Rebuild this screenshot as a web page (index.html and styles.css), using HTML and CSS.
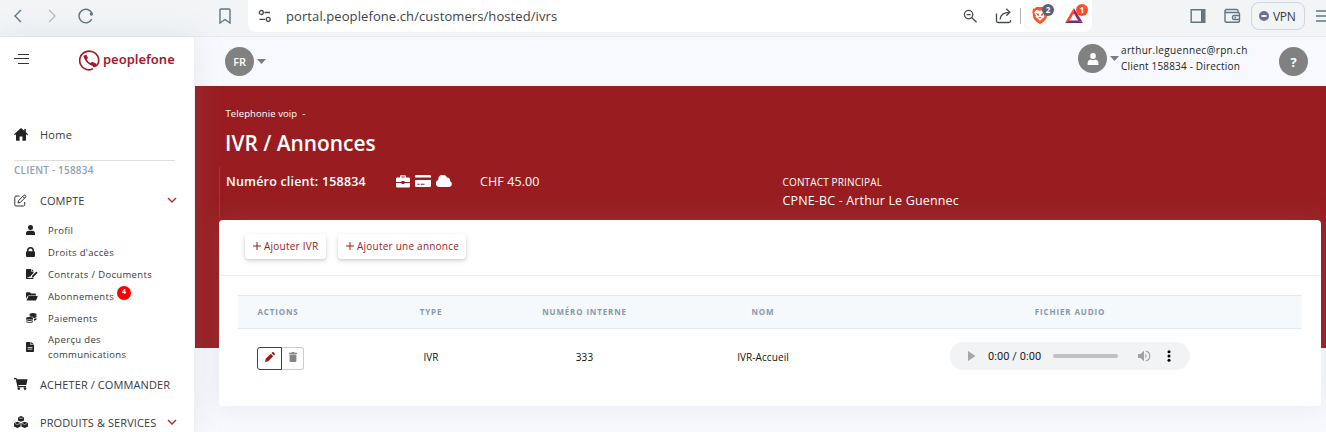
FILE: index.html
```html
<!DOCTYPE html>
<html lang="fr">
<head>
<meta charset="utf-8">
<title>IVR / Annonces</title>
<link rel="stylesheet" href="styles.css">
</head>
<body>
<header class="browser">
  <svg class="nav-back" width="10" height="16" viewBox="0 0 10 16"><path d="M8 2 2 8l6 6"/></svg>
  <svg class="nav-forward" width="10" height="16" viewBox="0 0 10 16"><path d="m2 2 6 6-6 6"/></svg>
  <svg class="reload" width="18" height="18" viewBox="0 0 18 18"><path d="M14.8 12.2A6.8 6.8 0 1 1 15 6.3"/><circle cx="14.4" cy="7" r="1.7" class="solid"/></svg>
  <svg class="bookmark" width="12" height="16" viewBox="0 0 12 16"><path d="M2 1h8a1 1 0 0 1 1 1v13l-5-3.5L1 15V2a1 1 0 0 1 1-1z"/></svg>
  <div class="address">
    <svg class="tune" width="14" height="14" viewBox="0 0 14 14"><circle cx="3.3" cy="3.5" r="2"/><path d="M6.5 3.5H12M1.5 10.3H7"/><circle cx="10.2" cy="10.3" r="2"/></svg>
    <span class="url">portal.peoplefone.ch/customers/hosted/ivrs</span>
    <svg class="lens" width="15" height="15" viewBox="0 0 15 15"><circle cx="5.6" cy="5.6" r="4.2"/><path d="M3.6 5.6h4M8.800 8.800l4.800 4.400"/></svg>
    <svg class="share" width="18" height="18" viewBox="0 0 18 18"><path d="M1.500 6.500V14q0 1.500 1.500 1.500h11q1.500 0 1.500-1.500v-1M5 12.500c.3-4.500 2.500-7 9.500-7.200M11.300 1.800l3.500 3.500-3.500 3.500"/></svg>
    <span class="sep"></span>
    <span class="extension brave">
      <svg width="18" height="20" viewBox="0 0 18 20"><path fill="#fb542b" d="M5.300 2h7.400l1.400 1.500 1.700.1.800 3-.8 5.700c-.7 3-3.800 5-6.800 6.800-3-1.800-6-3.800-6.800-6.800L1.400 6.600l.8-3 1.700-.1z"/><path fill="#fff" d="M5.200 5 9 5.700 12.800 5l2 2.500-1.600 2.800.2 1.600-2 1.500L9 16l-2.400-2.600-2-1.500.2-1.600-1.600-2.800z"/><path fill="#fb542b" d="m5.300 8 2.500.7.2 2.300-1.800-.7zM12.700 8l-2.500.7-.2 2.300 1.800-.7zM7.400 12.400 9 11.700l1.600.7L9 13.800z"/></svg>
      <b class="count">2</b>
    </span>
    <span class="extension rewards">
      <svg width="20" height="18" viewBox="0 0 20 18"><path fill="#ff4724" d="M9.800 1 1 16l4.500-2.500 4.400-7.300z"/><path fill="#9e1f63" d="m9.800 1 9.200 15-4.900-2.500L9.900 6.200z"/><path fill="#662d91" d="M1 16h18l-4.900-2.600H5.500z"/></svg>
      <b class="count orange">1</b>
    </span>
  </div>
  <svg class="panel" width="16" height="16" viewBox="0 0 16 16"><path d="M1.200 1.700h13.600v12.600H1.200z"/><path class="solid" d="M11 2h3.500v12H11z"/></svg>
  <svg class="wallet" width="17" height="16" viewBox="0 0 17 16"><path d="M14 4.500V3q0-1.500-1.500-1.500H2.500Q1 1.500 1 3v9.500Q1 14.300 3 14.300h11q1.500 0 1.500-1.500V6q0-1.500-1.500-1.500H2.500Q1 4.500 1 3M15.500 7.500H10q-1.500 0-1.500 2t1.500 2h5.500M10.500 9.500h1.500"/></svg>
  <span class="vpn"><i class="vpn-dot"></i>VPN</span>
  <svg class="app-menu" width="14" height="14" viewBox="0 0 14 14"><path d="M0 2h14M0 7h14M0 12h14"/></svg>
</header>

<div class="app">
  <aside class="sidebar">
    <div class="brand">
      <svg class="burger" width="16" height="12" viewBox="0 0 16 12"><path d="M4 1.500h11M0 5.500h15M4 10.500h11"/></svg>
      <svg class="logo" width="21" height="21" viewBox="0 0 21 21"><path class="ring" d="M19.300 13A9 9 0 0 0 13.500 1.800 9.300 9.300 0 1 0 14 18.800M14 16.200q3.500.8 5.300-3.200"/><path class="solid" d="M4.300 5.800 7.500 4.800 9 8 7.700 9.400Q9 11.900 11.700 13l1.600-1.200 4 2-.5 1.900q-1.700.6-4.500-.3Q6 12.700 4.300 5.800z"/></svg>
      <span class="brand-name">peoplefone</span>
    </div>
    <nav>
      <a class="item home"><svg width="14" height="13" viewBox="0 0 14 13"><path d="M7 0 0 6.300l.8.900 1.200-1V12q0 .8.800.8h2.800V8.500h2.800v4.300h2.800q.8 0 .8-.8V6.200l1.200 1 .8-.9-2.200-2V1h-1.500v1.700z"/></svg><span>Home</span></a>
      <p class="client">CLIENT - 158834</p>
      <a class="item account"><svg width="13" height="13" viewBox="0 0 13 13"><path class="line" d="M5.500 2H2Q.8 2 .8 3.200v7.600Q.8 12 2 12h7.500q1.200 0 1.200-1.200V8M4 9l.5-2.300L10 1.200q.5-.4 1 0l.7.800q.5.500 0 1L6.300 8.500zM8.800 2.400l1.800 1.800"/></svg><span>COMPTE</span><svg class="chev" width="10" height="6" viewBox="0 0 10 6"><path d="m1 1 4 4 4-4"/></svg></a>
      <div class="submenu">
        <a class="sub"><svg width="9" height="10" viewBox="0 0 9 10"><circle cx="4.500" cy="2.600" r="2.500"/><path d="M0 10V8.500Q0 5.800 2.800 5.800h3.400Q9 5.800 9 8.500V10z"/></svg><span>Profil</span></a>
        <a class="sub"><svg width="9" height="10" viewBox="0 0 9 10"><path d="M1 4.300V3.500a3.500 3.500 0 0 1 7 0v.8q1 0 1 1V9q0 1-1 1H1Q0 10 0 9V5.300q0-1 1-1zm1.500 0h4v-.8a2 2 0 0 0-4 0z"/></svg><span>Droits d'accès</span></a>
        <a class="sub"><svg width="12" height="10" viewBox="0 0 12 10"><path d="M0 .8Q0 0 .8 0H5v2.500h2.500V4L4.800 6.800 4.500 8l-.7-.8L3 8.300H1.500V9H5l2.500-.5V9.200q0 .8-.8.8H.8Q0 10 0 9.200zM5.700 0 7.500 1.900H5.700zM10.300 2.500l1.300 1.300L7.500 8l-1.700.4L6.200 6.700z"/></svg><span>Contrats / Documents</span></a>
        <a class="sub"><svg width="12" height="9" viewBox="0 0 12 9"><path d="M0 6.800V1.200Q0 .3.900.3h3L5 1.500h4q.9 0 .9.900v1H3Q2 3.400 1.600 4zM2.500 4h8.700q.7 0 .4.700L10.200 8q-.2.500-.8.500H.6Z"/></svg><span>Abonnements</span><b class="alert">4</b></a>
        <a class="sub"><svg width="11" height="10" viewBox="0 0 11 10"><ellipse cx="7" cy="1.500" rx="3.500" ry="1.500"/><path d="M3.500 2.500Q7 4 10.500 2.200V4Q9.500 5 7.800 5 7 3.600 3.500 3.500zM8 5.800q1.500 0 2.500-.8v1.500Q9.500 7.600 8 7.700z"/><ellipse cx="3.600" cy="5.200" rx="3.500" ry="1.300"/><path d="M.1 6.200q3.500 1.500 7 0v1.100q-3.500 1.600-7 0zm0 2q3.500 1.500 7 0V9q-3.500 1.700-7 0z"/></svg><span>Paiements</span></a>
        <a class="sub tall"><svg width="8" height="10" viewBox="0 0 8 10"><path fill-rule="evenodd" d="M0 .8Q0 0 .8 0h3.700v3H8v6.200q0 .8-.8.800H.8Q0 10 0 9.200zM5.200 0 8 2.400H5.200zM1.600 5v.8h4.800V5zm0 1.800v.8h4.800v-.8z"/></svg><span>Aperçu des<br>communications</span></a>
      </div>
      <a class="item shop"><svg width="14" height="12" viewBox="0 0 14 12"><path d="M0 0h2.500l.4 1.200h10.700L12.400 6.500q-.1.600-.8.600H4.300l.2 1H12v1.100H3.500L1.800 1.200H0z"/><circle cx="4.800" cy="10.600" r="1.300"/><circle cx="11" cy="10.600" r="1.300"/></svg><span>ACHETER / COMMANDER</span></a>
      <a class="item products"><svg width="14" height="12" viewBox="0 0 14 12"><path d="m7 0 3 1.200v3.300L7 5.700 4 4.500V1.200zM3.400 5.700l3.200 1.300v3.500L3.400 12 0 10.500V7zM10.600 5.700 14 7v3.500L10.600 12l-3.200-1.500V7z"/><path class="edge" d="M4.500 1.600 7 2.600l2.500-1M.7 7.400l2.700 1.200 2.700-1.200M8 7.400l2.600 1.200 2.700-1.200"/></svg><span>PRODUITS &amp; SERVICES</span><svg class="chev" width="10" height="6" viewBox="0 0 10 6"><path d="m1 1 4 4 4-4"/></svg></a>
    </nav>
  </aside>

  <main class="main">
    <div class="topbar">
      <span class="avatar lang">FR</span><i class="caret"></i>
      <span class="avatar user"><svg width="12" height="12" viewBox="0 0 12 12"><circle cx="6" cy="3" r="2.900"/><path d="M.6 12v-1.500Q.6 7 3.500 6.600q2.500 1.200 5 0 2.900.4 2.900 3.900V12z"/></svg></span><i class="caret"></i>
      <div class="identity"><span class="mail">arthur.leguennec@rpn.ch</span><span class="who">Client 158834 - Direction</span></div>
      <span class="avatar help">?</span>
    </div>
    <section class="hero">
      <p class="crumb">Telephonie voip &nbsp;-</p>
      <h1>IVR / Annonces</h1>
      <div class="summary">
        <strong class="number">Numéro client: 158834</strong>
        <span class="services">
          <svg width="14" height="13" viewBox="0 0 14 13"><path fill-rule="evenodd" d="M4 2.500V1.300Q4 .2 5 .2h4q1 0 1 1.100v1.200h2.700q1.300 0 1.300 1.300V7H8.500V6h-3v1H0V3.800q0-1.300 1.300-1.300zM5.300 1.500v1h3.400v-1zM0 8h5.500v1h3V8H14v3.200q0 1.300-1.300 1.300H1.300Q0 12.500 0 11.200z"/></svg>
          <svg width="16" height="12" viewBox="0 0 16 12"><path fill-rule="evenodd" d="M0 2.500V1.300Q0 0 1.300 0h13.400Q16 0 16 1.300v1.200zM0 5h16v5.700q0 1.300-1.300 1.300H1.300Q0 12 0 10.700zm2.500 3.800v1h2.200v-1zm3.300 0v1h3.700v-1z"/></svg>
          <svg width="17" height="12" viewBox="0 0 17 12"><path d="M3.700 12A3.600 3.600 0 0 1 2.300 5 4.600 4.600 0 0 1 11 2.500 2.800 2.800 0 0 1 14 6a3.200 3.200 0 0 1-.5 6z"/></svg>
        </span>
        <span class="balance">CHF 45.00</span>
        <div class="contact"><small>CONTACT PRINCIPAL</small><span>CPNE-BC - Arthur Le Guennec</span></div>
      </div>
    </section>
    <section class="card">
      <div class="toolbar">
        <button class="add"><svg width="8" height="8" viewBox="0 0 8 8"><path d="M4 0v8M0 4h8"/></svg><span>Ajouter IVR</span></button>
        <button class="add second"><svg width="8" height="8" viewBox="0 0 8 8"><path d="M4 0v8M0 4h8"/></svg><span>Ajouter une annonce</span></button>
      </div>
      <table class="ivrs">
        <colgroup><col class="c-actions"><col class="c-type"><col class="c-number"><col class="c-name"><col></colgroup>
        <thead><tr><th class="first">ACTIONS</th><th>TYPE</th><th>NUMÉRO INTERNE</th><th>NOM</th><th>FICHIER AUDIO</th></tr></thead>
        <tbody><tr>
          <td class="first"><div class="actions"><span class="edit"><svg width="10" height="10" viewBox="0 0 10 10"><path d="m0 10 .7-3.200 5-5L8.200 4.300l-5 5zM6.400 1.100 7.200.3q.7-.6 1.400 0L9.700 1.400q.6.700 0 1.400l-.8.800z"/></svg></span><span class="del"><svg width="8" height="10" viewBox="0 0 8 10"><path d="M0 .7h2.500L3 0h2l.5.700H8v1.200H0zM.6 2.600h6.800V9q0 1-1 1H1.600q-1 0-1-1z"/></svg></span></div></td>
          <td>IVR</td><td>333</td><td>IVR-Accueil</td>
          <td><div class="player">
            <svg class="play" width="8" height="10" viewBox="0 0 8 10"><path d="M0 0v10l7.500-5z"/></svg>
            <span class="time">0:00 / 0:00</span><i class="track"></i>
            <svg class="volume" width="13" height="12" viewBox="0 0 13 12"><path class="solid" d="M0 4h2.500L6 .8v10.400L2.500 8H0z"/><path class="solid" d="M7.300 3.500q2.500 2.500 0 5z"/><path d="M7.800 1q4 1.200 4 5t-4 5"/></svg>
            <svg class="dots" width="4" height="12" viewBox="0 0 4 12"><circle cx="2" cy="1.700" r="1.500"/><circle cx="2" cy="6" r="1.500"/><circle cx="2" cy="10.300" r="1.500"/></svg>
          </div></td>
        </tr></tbody>
      </table>
    </section>
  </main>
</div>
</body>
</html>
```
FILE: styles.css
```css
* { box-sizing: border-box; }
body { margin: 0; width: 1326px; height: 432px; overflow: hidden; background: #f8f9fe; color: #212529; font-family: "Open Sans", "Noto Sans", sans-serif; font-size: 10px; }
svg { display: block; flex: none; }
p, h1 { margin: 0; }
span, strong, small { white-space: nowrap; }

.browser { display: flex; align-items: flex-start; height: 37px; overflow: hidden; background: #f2f4f6; border-bottom: 1px solid #e7eaed; }
.browser > * { flex: none; }
.browser svg { fill: none; stroke: #627580; stroke-width: 1.4; }
.browser .solid { fill: #627580; stroke: none; }
.nav-back { margin: 8px 0 0 13px; }
.browser .nav-forward { margin: 8px 0 0 24px; stroke: #b4bec5; }
.reload { margin: 7px 0 0 20px; }
.bookmark { margin: 8px 0 0 124px; }
.address { display: flex; width: 844px; height: 32px; margin-left: 17px; padding-left: 10px; background: #fff; border-radius: 0 0 8px 8px; }
.address > * { flex: none; }
.browser .address svg { stroke: #454a4f; stroke-width: 1.3; }
.tune { margin-top: 9px; }
.url { width: 677px; margin-left: 14px; line-height: 33px; font-size: 13px; letter-spacing: .09px; color: #3d4248; }
.lens { margin-top: 9px; }
.share { margin: 7px 0 0 17px; }
.sep { width: 1px; height: 16px; margin: 8px 0 0 7px; background: #a9afb4; }
.extension { position: relative; }
.browser .address .extension svg { stroke: none; }
.brave { width: 18px; margin: 5px 0 0 10px; }
.rewards { width: 20px; margin: 7px 0 0 15px; }
.count { position: absolute; top: -1px; left: 11px; width: 12px; height: 12px; border-radius: 6px; background: #5b6070; color: #fff; font: bold 8px/12px "Open Sans", sans-serif; text-align: center; }
.rewards .count { top: -3px; left: 12px; background: #ff4b28; }
.panel { margin: 8px 0 0 98px; }
.wallet { margin: 8px 0 0 18px; }
.vpn { display: flex; align-items: center; width: 54px; height: 28px; margin: 2px 0 0 10px; padding-left: 7px; border: 1px solid #ced5dc; border-radius: 8px; font-size: 12px; letter-spacing: -.3px; color: #35393e; }
.vpn-dot { width: 10px; height: 10px; margin-right: 4px; border: solid #6b7096; border-width: 4px 2px; border-radius: 5px; background: #fff; }
.app-menu { margin: 9px 0 0 11px; }

.app { display: flex; height: 395px; }
.sidebar { position: relative; z-index: 1; width: 195px; padding: 0 20px 0 14px; background: #fff; border-right: 1px solid #eef0f5; box-shadow: 0 0 28px rgba(136, 152, 170, .17); }
.brand { display: flex; align-items: center; height: 44px; }
.burger { fill: none; stroke: #333; stroke-width: 1; }
.logo { margin: 2px 0 0 49px; }
.ring { fill: none; stroke: #a31b2b; stroke-width: 1.7; }
.logo .solid { fill: #a31b2b; }
.brand-name { margin: -1px 0 0 3px; font: 600 13px "Noto Sans", sans-serif; letter-spacing: -.02px; color: #a31b2b; }
.item { display: flex; align-items: center; height: 22px; font-size: 11px; color: #3a3a3a; }
.item > svg:first-child, .sub > svg { fill: #222; }
.item .edge { fill: none; stroke: #fff; stroke-width: .6; }
.item > span { margin-left: 12px; letter-spacing: .1px; }
.home { margin-top: 42px; }
.home > span { letter-spacing: .25px; }
.client { margin-top: 15px; width: 161px; padding-top: 2px; border-top: 1px solid #dedede; line-height: 15px; font-size: 10px; font-weight: 600; letter-spacing: .2px; color: #8fa0b5; }
.account { margin-top: 11px; }
.account > span { margin-left: 13px; letter-spacing: .05px; }
.item svg .line { fill: none; stroke: #333; stroke-width: 1; }
.item .chev { margin-left: auto; margin-right: -3px; fill: none; stroke: #b02a30; stroke-width: 1.4; }
.submenu { margin-top: 8px; padding-left: 12px; }
.sub { position: relative; display: grid; grid-template-columns: 22px auto; align-items: center; height: 22px; font-size: 9.5px; line-height: 15px; letter-spacing: .34px; color: #3a3a3a; }
.sub span { justify-self: start; }
.sub.tall { height: 36px; }
.alert { position: absolute; left: 91px; top: 1px; width: 14px; height: 14px; border-radius: 7px; background: #f00; color: #fff; font-size: 7px; line-height: 11px; letter-spacing: 0; text-align: center; }
.shop { margin-top: 8px; }
.products { margin-top: 16px; }

.main { width: 1131px; }
.topbar { display: flex; height: 49px; padding-left: 30px; }
.avatar { display: flex; align-items: center; justify-content: center; width: 29px; height: 29px; border-radius: 50%; background: #818181; color: #fff; }
.avatar svg { fill: #fff; }
.lang { margin-top: 10px; font-size: 11px; font-weight: 600; letter-spacing: -.2px; }
.caret { width: 9px; height: 5px; margin: 22px 0 0 3px; background: #777c86; clip-path: polygon(0 0, 100% 0, 50% 100%); }
.user { margin: 7px 0 0 812px; }
.user + .caret { margin-top: 19px; }
.identity { display: grid; grid-auto-rows: 16px; width: 158px; height: 32px; margin: 5px 0 0 2px; line-height: 16px; font-size: 10px; color: #222; }
.identity span { justify-self: start; }
.mail { font-weight: 500; letter-spacing: .33px; }
.who { letter-spacing: .18px; }
.help { margin-top: 10px; font-size: 13px; font-weight: 700; }
.hero { height: 262px; padding: 19px 0 0 30px; background: #991d20; color: #fff; }
.crumb { height: 18px; padding-left: .5px; font-size: 9.5px; line-height: 18px; letter-spacing: .09px; }
.hero h1 { margin-top: 6px; font-size: 20.9px; line-height: 28px; font-weight: 600; }
.summary { display: flex; height: 54px; margin: 9px 0 0 -6px; padding-left: 6px; border-left: 1px solid #a63236; border-radius: 4px 0 0 4px; }
.number { width: 170px; line-height: 32px; font-size: 12.5px; font-weight: 600; letter-spacing: .19px; }
.services { display: flex; align-items: center; gap: 5px; width: 84px; height: 30px; }
.services svg { fill: #fff; }
.balance { width: 302px; line-height: 32px; font-size: 12.5px; letter-spacing: .1px; }
.contact { display: grid; grid-auto-rows: 18px; height: 36px; margin-top: 8px; padding-left: .5px; line-height: 18px; font-size: 12.5px; letter-spacing: .15px; }
.contact > * { justify-self: start; }
.contact small { margin-top: -1px; font-size: 10px; }
.card { position: relative; width: 1102px; height: 186px; margin: -128px 0 0 24px; background: #fff; border-radius: 4px; box-shadow: 0 0 28px rgba(136, 152, 170, .17); }
.toolbar { display: flex; height: 56px; padding: 14px 0 0 26px; border-bottom: 1px solid #eeeff1; }
.add { display: flex; align-items: center; width: 81px; height: 25px; padding: 0 0 1px 8px; border: 0; border-radius: 3px; background: #fff; color: #991d20; font: 500 10px "Open Sans", sans-serif; letter-spacing: .23px; box-shadow: 0 2px 5px rgba(50, 50, 93, .18), 0 1px 2px rgba(0, 0, 0, .08); }
.add span { margin-left: 3px; }
.add.second { width: 128px; margin-left: 12px; }
.add svg { stroke: #991d20; stroke-width: 1; }
.ivrs { width: 1064px; margin: 19px 0 0 19px; border-collapse: separate; border-spacing: 0; table-layout: fixed; text-align: center; }
.c-actions { width: 143px; }
.c-type { width: 100px; }
.c-number { width: 207px; }
.c-name { width: 150px; }
th { height: 34px; padding: 0 0 1px; border: solid #e5eaef; border-width: 1px 0; background: #f5f9fc; color: #8898aa; font-size: 8px; font-weight: 700; letter-spacing: .85px; }
td { height: 57px; padding: 0 0 1px; color: #111; font-size: 10px; letter-spacing: .08px; }
.ivrs .first { padding-left: 19.5px; text-align: left; }
.actions { display: flex; width: 47px; height: 23px; margin: 2px 0 0 -.5px; }
.actions span { display: flex; align-items: center; justify-content: center; width: 25px; border: 1px solid #991d20; border-radius: 3px 0 0 3px; }
.actions svg { fill: #991d20; margin-top: -2px; }
.actions .del { width: 22px; border-color: #ccc; border-left: 0; border-radius: 0 3px 3px 0; }
.actions .del svg { fill: #858585; }
.player { display: flex; align-items: center; width: 240px; height: 28px; margin: -2px auto 0; padding-left: 18px; border-radius: 14px; background: #f1f3f4; }
.play { fill: #a5a6a7; }
.time { width: 65px; margin-left: 12px; text-align: left; font: 11px Roboto, sans-serif; letter-spacing: .08px; color: #202124; }
.track { width: 65px; height: 4px; border-radius: 2px; background: #bfc1c2; }
.volume { margin-left: 20px; fill: none; stroke: #a0a1a2; stroke-width: 1.2; }
.volume .solid { fill: #a0a1a2; stroke: none; }
.dots { margin-left: 16px; fill: #000; }
```
